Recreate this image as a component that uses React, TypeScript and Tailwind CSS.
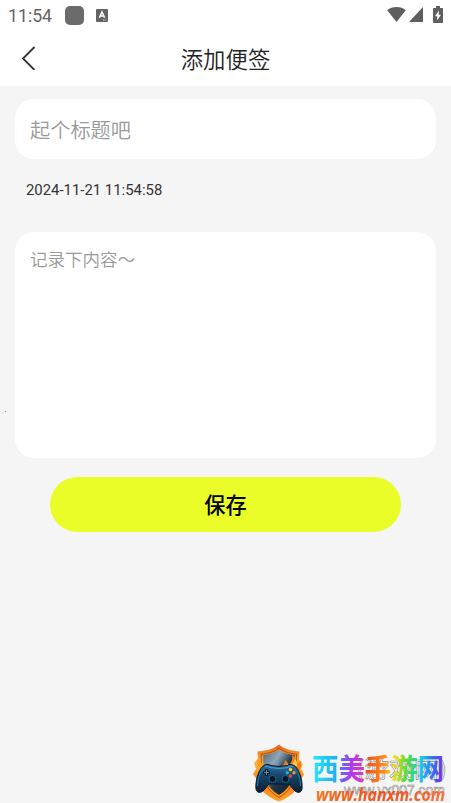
import { useState } from "react";

const StatusBar = () => (
  <div className="flex h-8 items-center justify-between pl-2 pr-[8px] text-[#646464]">
    <div className="flex items-center">
      <span className="w-[57px] font-['Roboto',sans-serif] text-[17.700px] leading-8">11:54</span>
      <span className="mb-[2px] h-[19px] w-[19px] rounded-[5px] bg-[#6b6b6b]" />
      <svg className="mb-[2px] ml-3 h-[13px] w-3" viewBox="0 0 12 13">
        <rect width="12" height="13" rx="1" fill="#646464" />
        <path d="M3.400 8.800 6 2.800l2.600 6M4.300 7h3.400" fill="none" stroke="#fff" strokeWidth="1.500" />
        <path d="M7 11h3.500" stroke="#ddd" strokeWidth="1" strokeDasharray="1 .6" />
      </svg>
    </div>
    <div className="mb-[3px] flex items-center">
      <svg className="h-[15px] w-[19px]" viewBox="0 0 19 15" fill="#5f5f5f">
        <path d="M9.500 15 .2 3.200C2.800 1 6 0 9.500 0s6.700 1 9.300 3.200z" />
      </svg>
      <svg className="ml-[3px] h-[15px] w-[14px]" viewBox="0 0 15 15" preserveAspectRatio="none" fill="#5f5f5f">
        <path d="M15 0v15H0z" />
      </svg>
      <svg className="ml-[10px] h-[17px] w-[10px]" viewBox="0 0 10 17">
        <path d="M3 0h4v2h2.200q.8 0 .8.8v13.400q0 .8-.8.8H.8q-.8 0-.8-.8V2.800Q0 2 .8 2H3z" fill="#5f5f5f" />
        <path d="M6 4.500 2 10.200h2.300L4 14.500l4-5.800H5.600z" fill="#fff" />
      </svg>
    </div>
  </div>
);

const ShieldLogo = () => (
  <svg className="h-[58px] w-[54px]" viewBox="0 0 54 58">
    <defs>
      <linearGradient id="rim" x1="0" y1="0" x2="0" y2="1">
        <stop offset="0" stopColor="#e2681c" />
        <stop offset=".35" stopColor="#ffb63a" />
        <stop offset=".65" stopColor="#f57a1a" />
        <stop offset="1" stopColor="#ffa62a" />
      </linearGradient>
      <linearGradient id="steel" x1="0" y1="0" x2="1" y2="1">
        <stop offset="0" stopColor="#2a4052" />
        <stop offset=".3" stopColor="#90a9ba" />
        <stop offset=".55" stopColor="#22384b" />
        <stop offset="1" stopColor="#0c1a28" />
      </linearGradient>
      <linearGradient id="pad" x1="0" y1="0" x2="0" y2="1">
        <stop offset="0" stopColor="#2f75a6" />
        <stop offset=".4" stopColor="#174469" />
        <stop offset="1" stopColor="#0a2038" />
      </linearGradient>
    </defs>
    <path d="M27 .5c5 4.500 13 6.500 20.500 7l-.5 8 4 5-2 4 3 6-3 5C47 45 39 53 27 57.500 15 53 6 45 5 35.500L1 30l3-5-2-6 4-4-.5-7.500C13.500 7 22 5 27 .5z" fill="url(#rim)" />
    <path d="M27 4c5 4 11 5.700 17.500 6.200C44.500 29 44 43.500 27 53.500 10 43.500 9 29 9.300 10.200 16 9.500 22.500 8 27 4z" fill="none" stroke="#a5410f" strokeWidth=".8" />
    <path d="M27 6c4.500 3 10 4.500 15.500 5C43 29 42 42 27 51 12 42 11 29 11.500 11 17 10.500 22.500 9 27 6z" fill="url(#steel)" />
    <path d="M27 6v18H11.500V11C17 10.500 22.500 9 27 6z" fill="#8aa0b1" opacity=".4" />
    <path d="M21 25c9-1 12-4 12-9 3 2 3 4 2 6 4-2 6-6 5-12 4 4 5 7 4 10l5-3c1 5-1 10-5 13z" fill="#fa7d16" />
    <path d="M28 24c4-1 7-3 8-5l1 3c3-1 5-4 6-7 3 3 2 6 1 9z" fill="#ffca40" />
    <path d="M10 25c-5-3-6-7-4-11 1 4 5 6 8 10z" fill="#ff9a20" />
    <path d="M13 21q3-1.500 6 .5 8 2 16 0 3-2 6-.5c6 2 10 16 9 24-.5 4-5 4.500-8 1L37 40H17l-5 6c-3 3.500-7.500 3-8-1-1-8 3-22 9-24z" fill="url(#pad)" stroke="#071727" />
    <path d="M13 22.500q3-1 5 1 9 2 18 0 2-2 5-1" fill="none" stroke="#4ba2d2" />
    <path d="M5.500 42c0-7 2-14 6-17M48.500 42c0-7-2-14-6-17" fill="none" stroke="#287cb0" />
    <path d="M14.500 25v7M11 28.500h7" stroke="#061321" strokeWidth="2.600" />
    <path d="M14.500 26v5M12 28.500h5" stroke="#8aa9bd" strokeWidth=".8" />
    <circle cx="20.500" cy="35" r="3.500" fill="#07182a" stroke="#286f99" strokeWidth=".8" />
    <circle cx="33.500" cy="35" r="3.500" fill="#07182a" stroke="#286f99" strokeWidth=".8" />
    <circle cx="38.500" cy="25.500" r="1.700" fill="#ffd22b" />
    <circle cx="35.300" cy="28.700" r="1.700" fill="#29a8df" />
    <circle cx="42" cy="28.700" r="1.700" fill="#ff902b" />
    <circle cx="38.500" cy="32" r="1.700" fill="#e94b28" />
  </svg>
);

const Watermark = () => (
  <div className="pointer-events-none absolute bottom-0 right-0 h-[63px] w-[211px]">
    <div className="absolute left-[12px] top-[4px]">
      <ShieldLogo />
    </div>
    <svg className="absolute inset-0 h-[63px] w-[211px]" viewBox="0 0 211 63">
      <defs>
        <linearGradient id="rainbow" gradientUnits="userSpaceOnUse" x1="73" y1="24" x2="203" y2="34">
          <stop offset="0" stopColor="#27e6fa" />
          <stop offset=".17" stopColor="#20b4f4" />
          <stop offset=".21" stopColor="#5572f4" />
          <stop offset=".3" stopColor="#b636ef" />
          <stop offset=".38" stopColor="#d83bc0" />
          <stop offset=".42" stopColor="#f4511c" />
          <stop offset=".54" stopColor="#ff8a19" />
          <stop offset=".62" stopColor="#f8dc1d" />
          <stop offset=".71" stopColor="#5fdc2f" />
          <stop offset=".78" stopColor="#2bd590" />
          <stop offset=".82" stopColor="#20cdec" />
          <stop offset=".91" stopColor="#287af3" />
          <stop offset="1" stopColor="#7c29e8" />
        </linearGradient>
        <linearGradient id="ember" x1="0" y1="0" x2="1" y2="0">
          <stop offset="0" stopColor="#f37321" />
          <stop offset=".5" stopColor="#e9531d" />
          <stop offset="1" stopColor="#f87038" />
        </linearGradient>
      </defs>
      <text x="116" y="37" textLength="91" lengthAdjust="spacingAndGlyphs" fontSize="22" fill="#fff" stroke="#8a8a8a" strokeWidth=".6" className="font-['Noto_Sans_CJK_SC',sans-serif]">(游戏网)</text>
      <text x="104" y="55" textLength="101" lengthAdjust="spacingAndGlyphs" fontSize="15" fill="#fff" stroke="#8a8a8a" strokeWidth=".6" className="font-['Liberation_Sans',sans-serif]">www.yx007.com</text>
      <text x="72" y="40" textLength="132" lengthAdjust="spacingAndGlyphs" fontSize="29" fill="url(#rainbow)" className="font-['Noto_Sans_CJK_SC',sans-serif] font-bold">西美手游网</text>
      <text x="76" y="61" textLength="129" lengthAdjust="spacingAndGlyphs" fontSize="17" fill="url(#ember)" className="font-['Open_Sans',sans-serif] font-bold italic">www.hanxm.com</text>
    </svg>
  </div>
);

const App = () => {
  const [title, setTitle] = useState("");
  const [content, setContent] = useState("");

  return (
    <div className="relative flex h-[803px] w-full flex-col overflow-hidden bg-[#f5f5f5] font-['Noto_Sans_CJK_SC',sans-serif]">
      <header className="h-[86px] bg-white">
        <StatusBar />
        <div className="grid h-[52px] grid-cols-[48px_1fr_48px] items-center">
          <button className="flex h-full items-center pl-[21px]">
            <svg className="h-6 w-[15px]" viewBox="0 0 15 24" fill="none" stroke="#333" strokeWidth="1.800">
              <path d="M13.500 1 2 12.500 13.500 24" />
            </svg>
          </button>
          <h1 className="text-center text-[22.400px] font-[350] leading-[52px] text-[#222]">添加便签</h1>
        </div>
      </header>

      <main className="flex flex-col px-[15px] pt-[13px]">
        <input
          value={title}
          onChange={(e) => setTitle(e.target.value)}
          placeholder="起个标题吧"
          className="h-[60px] rounded-[19px] bg-white px-[15px] text-[20.200px] font-[350] text-[#333] outline-none placeholder:text-[#999]"
        />
        <p className="mt-[19px] pl-[11px] font-['Roboto',sans-serif] text-[14.900px] leading-6 text-[#333]">2024-11-21 11:54:58</p>
        <textarea
          value={content}
          onChange={(e) => setContent(e.target.value)}
          placeholder="记录下内容～"
          className="mt-[30px] h-[226px] resize-none rounded-[19px] bg-white px-[15px] py-[14px] text-[17.500px] font-[350] leading-[26px] text-[#333] outline-none placeholder:text-[#999]"
        />
        <button className="mx-[35px] mt-[19px] h-[55px] rounded-full bg-[#ebfd28] pb-[2px] text-[21.200px] font-medium text-black">保存</button>
      </main>

      <span className="absolute left-[5px] top-[411px] h-px w-px bg-[#999]" />
      <Watermark />
    </div>
  );
};

export default App;
